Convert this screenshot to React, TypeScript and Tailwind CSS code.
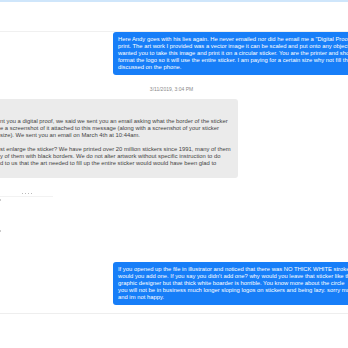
import React from 'react';

const outgoingOne = [
    'Here Andy goes with his lies again. He never emailed nor did he email me a "Digital Proof"',
    'print.  The art work I provided was a vector image it can be scaled and put onto any object',
    'wanted you to take this image and print it on a circular sticker. You are the printer and should',
    'format the logo so it will use the entire sticker. I am paying for a certain size why not fill the',
    'discussed on the phone.',
];

const incoming = [
    'nt you a digital proof, we said we sent you an email asking what the border of the sticker',
    'e a screenshot of it attached to this message (along with a screenshot of your sticker',
    'size).  We sent you an email on March 4th at 10:44am.',
    '',
    'st enlarge the sticker?  We have printed over 20 million stickers since 1991, many of them',
    'y of them with black borders.  We do not alter artwork without specific instruction to do',
    'd to us that the art needed to fill up the entire sticker would would have been glad to',
];

const outgoingTwo = [
    'If you opened up the file in illustrator and noticed that there was NO THICK WHITE stroke',
    "would you add one. If you say you didn't add one? why would you leave that sticker like that",
    'graphic designer but that thick white boarder is horrible. You know more about the circle',
    'you will not be in business much longer sloping logos on stickers and being lazy. sorry man',
    'and im not happy.',
];

function Lines({ lines }: { lines: string[] }) {
    return (
        <>
            {lines.map((line, i) => (
                <div key={i} className="h-[7px] leading-[7px] whitespace-nowrap">
                    {line}
                </div>
            ))}
        </>
    );
}

function BlueBubble({ lines }: { lines: string[] }) {
    return (
        <div className="ml-[113px] w-[300px] rounded-l-[3px] bg-[#177ef8] px-[5px] py-[4px] text-[5.85px] text-white">
            <Lines lines={lines} />
        </div>
    );
}

export default function App() {
    return (
        <div
            className="w-[348px] h-[348px] overflow-hidden bg-white flex flex-col"
            style={{ fontFamily: '"Liberation Sans", Arial, sans-serif' }}
        >
            <div className="h-[2px] bg-[#cfe6fb]" />

            <div className="mt-[29px] border-t border-[#f0f0f0]">
                <BlueBubble lines={outgoingOne} />
            </div>

            <div className="mt-[11px] h-[6px] leading-[6px] text-center text-[5px] text-[#8a8a8a] pr-[5px]">
                3/11/2019, 3:04 PM
            </div>

            <div className="mt-[7px] w-[238px] rounded-r-[3px] bg-[#ebebeb] pt-[19px] pb-[11px] text-[5.85px] text-[#444]">
                <Lines lines={incoming} />
            </div>

            <div className="relative mt-[18px] h-[1px] w-[53px] bg-[#f2f2f2]">
                <div className="absolute left-[22px] top-[-3px] flex gap-[2px]">
                    <span className="h-[1px] w-[1px] bg-[#bbb]" />
                    <span className="h-[1px] w-[1px] bg-[#bbb]" />
                    <span className="h-[1px] w-[1px] bg-[#bbb]" />
                    <span className="h-[1px] w-[1px] bg-[#bbb]" />
                </div>
            </div>

            <div className="mt-[2px] h-[2px] w-[1px] bg-[#ccc]" />
            <div className="mt-[29px] h-[2px] w-[1px] bg-[#ccc]" />

            <div className="mt-[30px]">
                <BlueBubble lines={outgoingTwo} />
            </div>

            <div className="mt-[8px] border-t border-[#eeeeee]" />
        </div>
    );
}
